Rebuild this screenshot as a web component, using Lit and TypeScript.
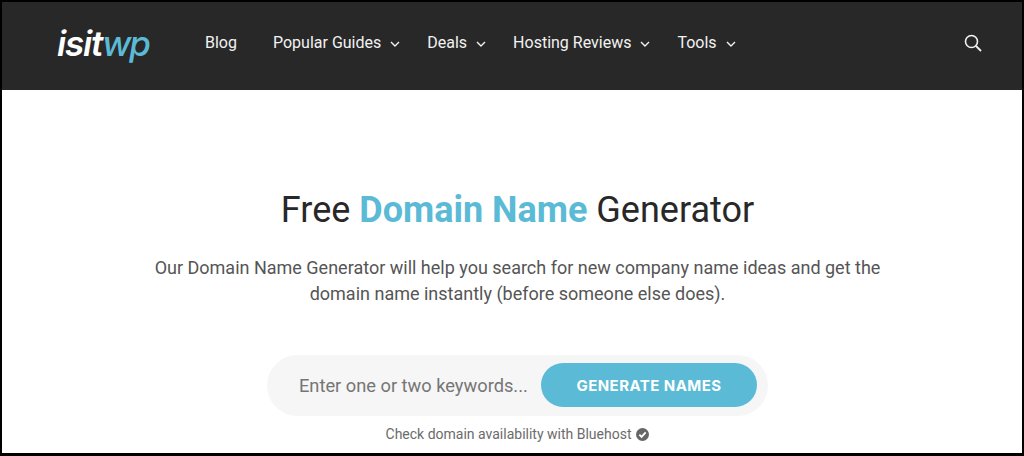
import { LitElement, html, css } from "lit";
import { customElement } from "lit/decorators.js";

const chevron = html`<svg class="chev" viewBox="0 0 10 6" width="10" height="6"><path d="M1 1l4 4 4-4" fill="none" stroke="currentColor" stroke-width="1.4"/></svg>`;

@customElement("app-root")
export class AppRoot extends LitElement {
  static styles = css`
    :host { display: block; font-family: Roboto, "Liberation Sans", sans-serif; }
    .frame { box-sizing: border-box; width: 1024px; height: 456px; border: 2px solid #000; border-bottom-width: 3px; background: #fff; overflow: hidden; }
    header { height: 88px; background: #282828; display: flex; align-items: center; color: #f2f2f2; padding: 0 40px 6px 55px; box-sizing: border-box; }
    .logo { font-family: Inter, Roboto, sans-serif; font-style: italic; font-weight: 600; font-size: 35px; letter-spacing: -1.2px; line-height: 40px; width: 148px; color: #fff; }
    .logo span { color: #5bbad5; font-weight: 500; letter-spacing: -1.8px; }
    nav { display: flex; align-items: center; gap: 27px; font-size: 16px; line-height: 20px; }
    nav a { display: flex; align-items: center; white-space: nowrap; }
    nav a.first { margin-right: 9px; }
    .chev { margin-left: 9px; margin-top: 2px; }
    .search { margin-left: auto; display: block; }
    main { display: flex; flex-direction: column; align-items: center; padding-left: 11px; }
    h1 { margin: 99px 0 0; font-size: 36px; font-weight: 400; line-height: 42px; color: #282828; }
    h1 b { color: #5bbad5; font-weight: 700; }
    p { margin: 24px 0 0; width: 740px; text-align: center; font-size: 18px; line-height: 26px; color: #555; }
    .form { margin-top: 48px; width: 501px; height: 61px; box-sizing: border-box; border-radius: 31px; background: #f6f6f6; display: flex; align-items: center; padding: 0 11px 1px 32px; justify-content: space-between; }
    .ph { font-size: 18.25px; color: #757575; white-space: nowrap; }
    .btn { width: 216px; height: 44px; border-radius: 22px; background: #5bbad5; color: #fff; font-family: Inter, Roboto, sans-serif; font-weight: 700; font-size: 15px; letter-spacing: 0.45px; display: flex; align-items: center; justify-content: center; }
    .note { margin-top: 10px; font-size: 14px; line-height: 16px; color: #6b6b6b; display: flex; align-items: center; gap: 5px; }
  `;
  render() {
    return html`<div class="frame">
      <header>
        <div class="logo">isit<span>wp</span></div>
        <nav>
          <a class="first">Blog</a>
          <a>Popular Guides ${chevron}</a>
          <a>Deals ${chevron}</a>
          <a>Hosting Reviews ${chevron}</a>
          <a>Tools ${chevron}</a>
        </nav>
        <svg class="search" viewBox="0 0 18 18" width="18" height="18"><circle cx="7.5" cy="7.5" r="6" fill="none" stroke="#f2f2f2" stroke-width="1.6"/><path d="M12 12l5 5" stroke="#f2f2f2" stroke-width="1.8"/></svg>
      </header>
      <main>
        <h1>Free <b>Domain Name</b> Generator</h1>
        <p>Our Domain Name Generator will help you search for new company name ideas and get the domain name instantly (before someone else does).</p>
        <div class="form"><span class="ph">Enter one or two keywords...</span><span class="btn">GENERATE NAMES</span></div>
        <div class="note">Check domain availability with Bluehost
          <svg viewBox="0 0 14 14" width="13" height="13"><circle cx="7" cy="7" r="7" fill="#666"/><path d="M3.6 7.2l2.4 2.4 4.4-4.9" fill="none" stroke="#fff" stroke-width="2"/></svg>
        </div>
      </main>
    </div>`;
  }
}
